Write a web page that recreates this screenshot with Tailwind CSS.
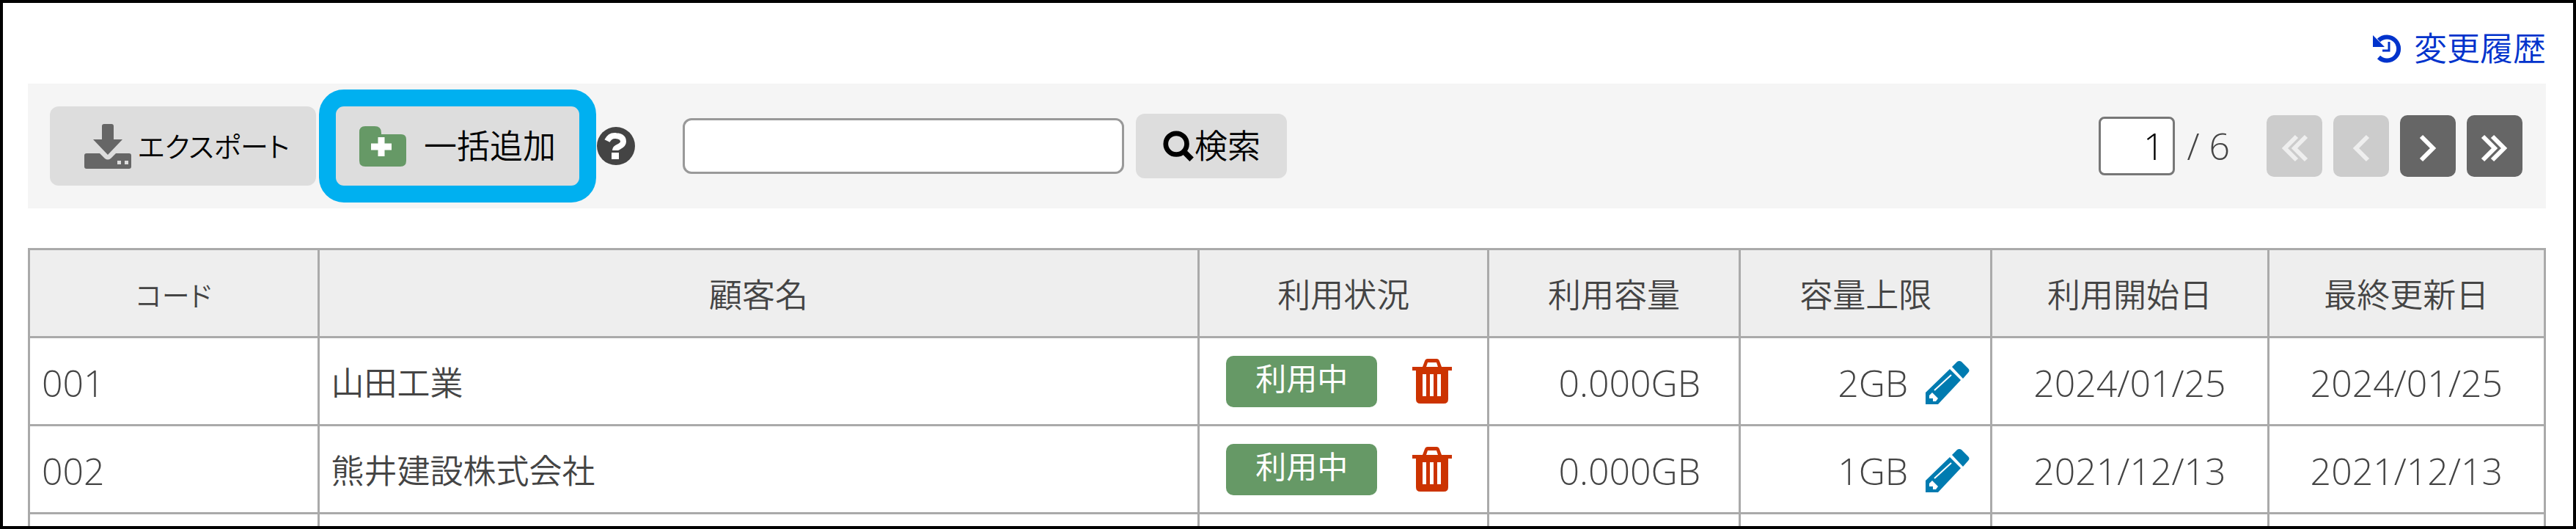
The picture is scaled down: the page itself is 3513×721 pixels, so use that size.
<!DOCTYPE html>
<html lang="ja">
<head>
  <meta charset="UTF-8">
  <meta name="viewport" content="width=device-width, initial-scale=1.0">
  <title>顧客一覧</title>
  <script src="https://cdn.jsdelivr.net/npm/@tailwindcss/browser@4"></script>
</head>
<body class="h-screen overflow-hidden border-4 border-black bg-white pr-[37px] pl-[34px] font-['Open_Sans','Noto_Sans_CJK_JP',sans-serif] text-[45px] font-[350] leading-[60px] text-[#444]">
  <!-- History link -->
  <div class="flex justify-end pt-8 pb-[18px]">
    <a href="#" class="flex items-center gap-4 text-[#0033cc]">
      <svg class="size-10" viewBox="0 0 40 40" fill="none" stroke="currentColor" aria-hidden="true">
        <path d="M8 9a16 16 0 1 1 0 23" stroke-width="6"/>
        <path d="M0 2v16h16z" fill="currentColor" stroke="none"/>
        <path d="M22 11v12h-9" stroke-width="3"/>
      </svg>
      変更履歴
    </a>
  </div>

  <!-- Toolbar -->
  <div class="flex h-[170px] items-center bg-[#f5f5f5] pr-8 pl-[30px]">
    <button class="flex h-[108px] items-center gap-2 rounded-xl bg-[#ddd] pr-9 pl-[46px] text-[38px] text-black [font-feature-settings:'palt']">
      <svg class="h-16 w-[66px]" viewBox="0 0 66 64" fill="#666" aria-hidden="true">
        <path d="M28 2h10a3 3 0 0 1 3 3v18h12L33 44 13 23h12V5a3 3 0 0 1 3-3z"/>
        <path fill-rule="evenodd" d="M4 42h18l7 7q4 3 8 0l7-7h18a3 3 0 0 1 3 3v15a3 3 0 0 1-3 3H4a3 3 0 0 1-3-3V45a3 3 0 0 1 3-3zm42 10v5h5v-5zm10 0v5h5v-5z"/>
      </svg>
      エクスポート
    </button>
    <button class="ml-1 flex h-[154px] items-center gap-6 rounded-[34px] border-[23px] border-[#00b0f0] bg-[#ddd] px-8 text-black">
      <svg class="h-14 w-16" viewBox="0 0 64 56" aria-hidden="true">
        <path fill="#669966" d="M8 1h13q9 0 9 9v2h27q7 0 7 7v29q0 8-8 8H8q-8 0-8-8V9q0-8 8-8z"/>
        <path stroke="#fff" stroke-width="9" d="M30 16v26M16 29h28"/>
      </svg>
      一括追加
    </button>
    <button aria-label="ヘルプ">
      <svg class="size-[54px]" viewBox="0 0 54 54" aria-hidden="true">
        <circle cx="27" cy="27" r="26" fill="#444"/>
        <path fill="none" stroke="#fff" stroke-width="8" d="M15 20q4-8 12-7 10 1 10 8 0 4-6 7-5 2-5 5"/>
        <path fill="#fff" d="M21 36h10v9H21z"/>
      </svg>
    </button>
    <form class="ml-16 flex items-center gap-4">
      <input type="text" aria-label="検索キーワード" class="h-[76px] w-[602px] rounded-xl border-3 border-[#999] bg-white px-4 text-black">
      <button type="button" class="flex h-[88px] items-center rounded-xl bg-[#ddd] px-9 text-black">
        <svg class="size-[44px]" viewBox="0 0 46 46" fill="none" stroke="currentColor" aria-hidden="true">
          <circle cx="20" cy="20" r="15" stroke-width="7"/>
          <path d="M30 30l12 12" stroke-width="8"/>
        </svg>
        検索
      </button>
    </form>
    <nav class="ml-auto flex items-center" aria-label="ページ送り">
      <label class="mr-[50px] flex items-center gap-4 text-[50px]">
        <input type="text" value="1" aria-label="ページ" class="h-20 w-[104px] rounded-lg border-3 border-[#777] bg-white pr-3 text-right text-black">
        / 6
      </label>
      <div class="flex gap-[15px]">
        <button disabled aria-label="最初" class="rounded-[10px] bg-[#ccc] text-[#eee]">
          <svg class="h-[84px] w-[76px]" viewBox="0 0 76 84" fill="none" stroke="currentColor" stroke-width="6" aria-hidden="true"><path d="M41 29L25 45l16 16M54 29L38 45l16 16"/></svg>
        </button>
        <button disabled aria-label="前" class="rounded-[10px] bg-[#ccc] text-[#eee]">
          <svg class="h-[84px] w-[76px]" viewBox="0 0 76 84" fill="none" stroke="currentColor" stroke-width="6" aria-hidden="true"><path d="M47 29L31 45l16 16"/></svg>
        </button>
        <button aria-label="次" class="rounded-[10px] bg-[#666] text-white">
          <svg class="h-[84px] w-[76px]" viewBox="0 0 76 84" fill="none" stroke="currentColor" stroke-width="6" aria-hidden="true"><path d="M29 29l16 16-16 16"/></svg>
        </button>
        <button aria-label="最後" class="rounded-[10px] bg-[#666] text-white">
          <svg class="h-[84px] w-[76px]" viewBox="0 0 76 84" fill="none" stroke="currentColor" stroke-width="6" aria-hidden="true"><path d="M22 29l16 16-16 16M35 29l16 16-16 16"/></svg>
        </button>
      </div>
    </nav>
  </div>

  <!-- Customer table -->
  <table class="mt-[54px] w-full table-fixed border-collapse [&_td]:border-3 [&_td]:border-[#aaa] [&_td]:px-4 [&_td]:pt-1 [&_th]:border-3 [&_th]:border-[#aaa] [&_th]:pt-1">
    <colgroup>
      <col class="w-[11.5%]">
      <col>
      <col class="w-[11.5%]">
      <col class="w-[10%]">
      <col class="w-[10%]">
      <col class="w-[11%]">
      <col class="w-[11%]">
    </colgroup>
    <thead>
      <tr class="h-[120px] bg-[#eee] [&_th]:font-[350]">
        <th class="text-[38px] [font-feature-settings:'palt']">コード</th>
        <th>顧客名</th>
        <th>利用状況</th>
        <th>利用容量</th>
        <th>容量上限</th>
        <th>利用開始日</th>
        <th>最終更新日</th>
      </tr>
    </thead>
    <tbody id="customerRows"></tbody>
  </table>

  <!-- Row template -->
  <template id="rowTemplate">
    <tr class="h-[120px]">
      <td data-field="code" class="text-[50px]"></td>
      <td data-field="name"></td>
      <td>
        <div class="flex items-center justify-center gap-12 pr-3 pb-1">
          <button class="h-[70px] w-[206px] rounded-[10px] bg-[#669966] pb-2 text-[42px] font-normal text-white">利用中</button>
          <button aria-label="削除">
            <svg class="h-[62px] w-[54px]" viewBox="0 0 54 62" aria-hidden="true">
              <path fill="#cc3300" fill-rule="evenodd" d="M14 11l3-8q1-3 4-3h12q3 0 4 3l3 8h14v5h-5v39q0 6-6 6H11q-6 0-6-6V16H0v-5zm5 0h16l-2-6H21zM14 21v30h5V21zm10 0v30h5V21zm10 0v30h5V21z"/>
            </svg>
          </button>
        </div>
      </td>
      <td class="text-right text-[50px]"><span data-field="used" class="pr-9"></span></td>
      <td>
        <div class="flex items-center justify-end gap-6 pr-3 text-[50px]">
          <span data-field="limit"></span>
          <button aria-label="容量上限を編集">
            <svg class="size-[60px]" viewBox="0 0 60 60" aria-hidden="true">
              <path fill="#007bb0" d="M0 43L33 11l15 15-31 33H0z"/>
              <path fill="#007bb0" d="M36 8l7-7q3-2 6 0l9 9q3 3 0 6l-7 8z"/>
              <path fill="#fff" d="M5 47l4-4 8 8-3 4h-4v-4H5z"/>
              <path stroke="#fff" stroke-width="2" d="M12 40l23-21"/>
            </svg>
          </button>
        </div>
      </td>
      <td data-field="start" class="text-center text-[50px]"></td>
      <td data-field="updated" class="text-center text-[50px]"></td>
    </tr>
  </template>

  <script>
    const customers = [
      { code: '001', name: '山田工業', used: '0.000GB', limit: '2GB', start: '2024/01/25', updated: '2024/01/25' },
      { code: '002', name: '熊井建設株式会社', used: '0.000GB', limit: '1GB', start: '2021/12/13', updated: '2021/12/13' },
    ];
    const rows = document.getElementById('customerRows');
    const template = document.getElementById('rowTemplate');

    customers.forEach((customer) => {
      const row = template.content.cloneNode(true);
      row.querySelectorAll('[data-field]').forEach((el) => {
        el.textContent = customer[el.dataset.field];
      });
      rows.appendChild(row);
    });

    // Blank row that runs off the bottom of the window
    const blank = rows.insertRow();
    blank.className = 'h-[120px]';
    for (let i = 0; i < 7; i++) blank.insertCell();
  </script>
</body>
</html>
